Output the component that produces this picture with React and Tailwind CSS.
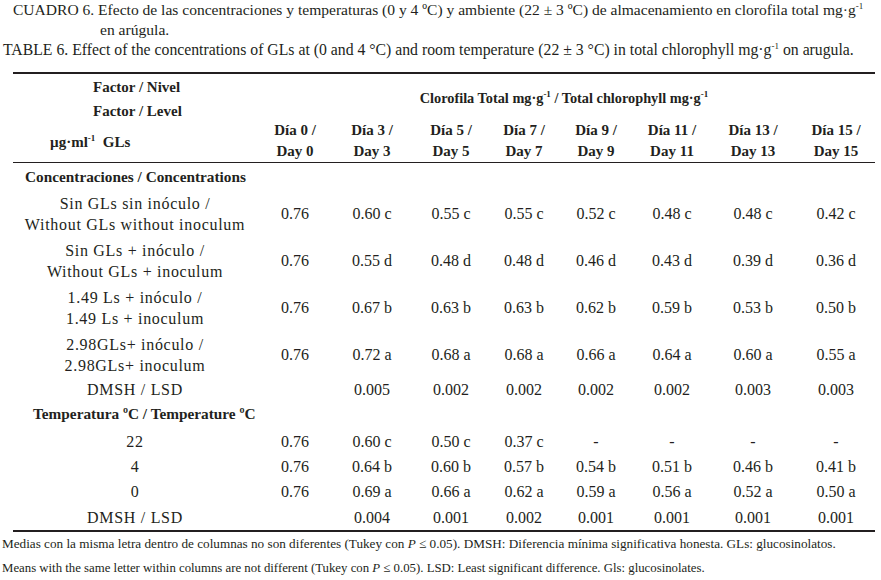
const COLS = 'grid grid-cols-[244px_76px_78px_80px_66px_78px_74px_88px_78px]'

const days = [0, 3, 5, 7, 9, 11, 13, 15]

const concRows = [
  { label: ['Sin GLs sin inóculo /', 'Without GLs without inoculum'], v: ['0.76', '0.60 c', '0.55 c', '0.55 c', '0.52 c', '0.48 c', '0.48 c', '0.42 c'] },
  { label: ['Sin GLs + inóculo /', 'Without GLs + inoculum'], v: ['0.76', '0.55 d', '0.48 d', '0.48 d', '0.46 d', '0.43 d', '0.39 d', '0.36 d'] },
  { label: ['1.49 Ls + inóculo /', '1.49 Ls + inoculum'], v: ['0.76', '0.67 b', '0.63 b', '0.63 b', '0.62 b', '0.59 b', '0.53 b', '0.50 b'] },
  { label: ['2.98GLs+ inóculo /', '2.98GLs+ inoculum'], v: ['0.76', '0.72 a', '0.68 a', '0.68 a', '0.66 a', '0.64 a', '0.60 a', '0.55 a'] },
]

const lsdConc = ['', '0.005', '0.002', '0.002', '0.002', '0.002', '0.003', '0.003']

const tempRows = [
  { label: '22', v: ['0.76', '0.60 c', '0.50 c', '0.37 c', '-', '-', '-', '-'], h: 'h-[26px]' },
  { label: '4', v: ['0.76', '0.64 b', '0.60 b', '0.57 b', '0.54 b', '0.51 b', '0.46 b', '0.41 b'], h: 'h-[25px]' },
  { label: '0', v: ['0.76', '0.69 a', '0.66 a', '0.62 a', '0.59 a', '0.56 a', '0.52 a', '0.50 a'], h: 'h-[25px]' },
]

const lsdTemp = ['', '0.004', '0.001', '0.002', '0.001', '0.001', '0.001', '0.001']

function Sup({ children }) {
  return <sup className="text-[9px] relative -top-[6px] tracking-normal">{children}</sup>
}

function ValueRow({ label, values, h }) {
  return (
    <div className={`${COLS} ${h} items-center leading-[21px]`}>
      <div className="text-center tracking-[0.7px]">{label}</div>
      {values.map((v, i) => (
        <div key={i} className="text-center">{v}</div>
      ))}
    </div>
  )
}

export default function App() {
  return (
    <div
      className="w-[881px] h-[580px] overflow-hidden bg-white text-[#231f20] text-[16px]"
      style={{ fontFamily: '"Liberation Serif", "Times New Roman", serif' }}
    >
      {/* caption */}
      <div className="leading-[20px] whitespace-nowrap">
        <div className="pl-[13px] text-[15.55px]">
          CUADRO 6. Efecto de las concentraciones y temperaturas (0 y 4 ºC) y ambiente (22 ± 3 ºC) de almacenamiento en clorofila total mg·g<Sup>-1</Sup>
        </div>
        <div className="pl-[100px] text-[15.6px]">en arúgula.</div>
        <div className="pl-[3px] text-[15.75px]">
          TABLE 6. Effect of the concentrations of GLs at (0 and 4 °C) and room temperature (22 ± 3 °C) in total chlorophyll mg·g<Sup>-1</Sup> on arugula.
        </div>
      </div>

      <div className="ml-[13px] w-[862px]">
        <div className="mt-[12px] h-[2px] bg-[#231f20]" />

        {/* header */}
        <div className="flex h-[88px] font-bold text-[15px]">
          <div className="w-[244px] pt-[1px] leading-[24px]">
            <div className="pl-[80px]">Factor / Nivel</div>
            <div className="pl-[80px]">Factor / Level</div>
            <div className="mt-[7px] pl-[37px]">
              µg·ml<Sup>-1</Sup>&nbsp; GLs
            </div>
          </div>
          <div className="flex-1">
            <div className="pt-[12px] leading-[24px] text-center text-[14.3px] pr-[4px]">
              Clorofila Total mg·g<Sup>-1</Sup> / Total chlorophyll mg·g<Sup>-1</Sup>
            </div>
            <div className="grid grid-cols-[76px_78px_80px_66px_78px_74px_88px_78px] mt-[10px] leading-[21px]">
              {days.map(d => (
                <div key={d} className="text-center">
                  <div>Día {d} /</div>
                  <div>Day {d}</div>
                </div>
              ))}
            </div>
          </div>
        </div>
        <div className="h-[1px] bg-[#231f20]" />

        {/* concentrations */}
        <div className="h-[27px] flex items-center pl-[12px] pt-[2px] font-bold text-[15.3px]">
          Concentraciones / Concentrations
        </div>
        {concRows.map((r, i) => (
          <ValueRow
            key={i}
            h="h-[47px]"
            label={<><div>{r.label[0]}</div><div>{r.label[1]}</div></>}
            values={r.v}
          />
        ))}
        <ValueRow h="h-[22px]" label="DMSH / LSD" values={lsdConc} />

        {/* temperature */}
        <div className="h-[28px] flex items-center pl-[20px] font-bold text-[15.3px]">
          Temperatura ºC / Temperature ºC
        </div>
        {tempRows.map(r => (
          <ValueRow key={r.label} h={r.h} label={r.label} values={r.v} />
        ))}
        <ValueRow h="h-[26px]" label="DMSH / LSD" values={lsdTemp} />
        <div className="h-[2px] bg-[#231f20]" />
      </div>

      {/* notes */}
      <div className="leading-[24px] pl-[2px] whitespace-nowrap">
        <div className="text-[13.2px]">
          Medias con la misma letra dentro de columnas no son diferentes (Tukey con <i>P</i> ≤ 0.05). DMSH: Diferencia mínima significativa honesta. GLs: glucosinolatos.
        </div>
        <div className="text-[12.8px]">
          Means with the same letter within columns are not different (Tukey con <i>P</i> ≤ 0.05). LSD: Least significant difference. Gls: glucosinolates.
        </div>
      </div>
    </div>
  )
}
